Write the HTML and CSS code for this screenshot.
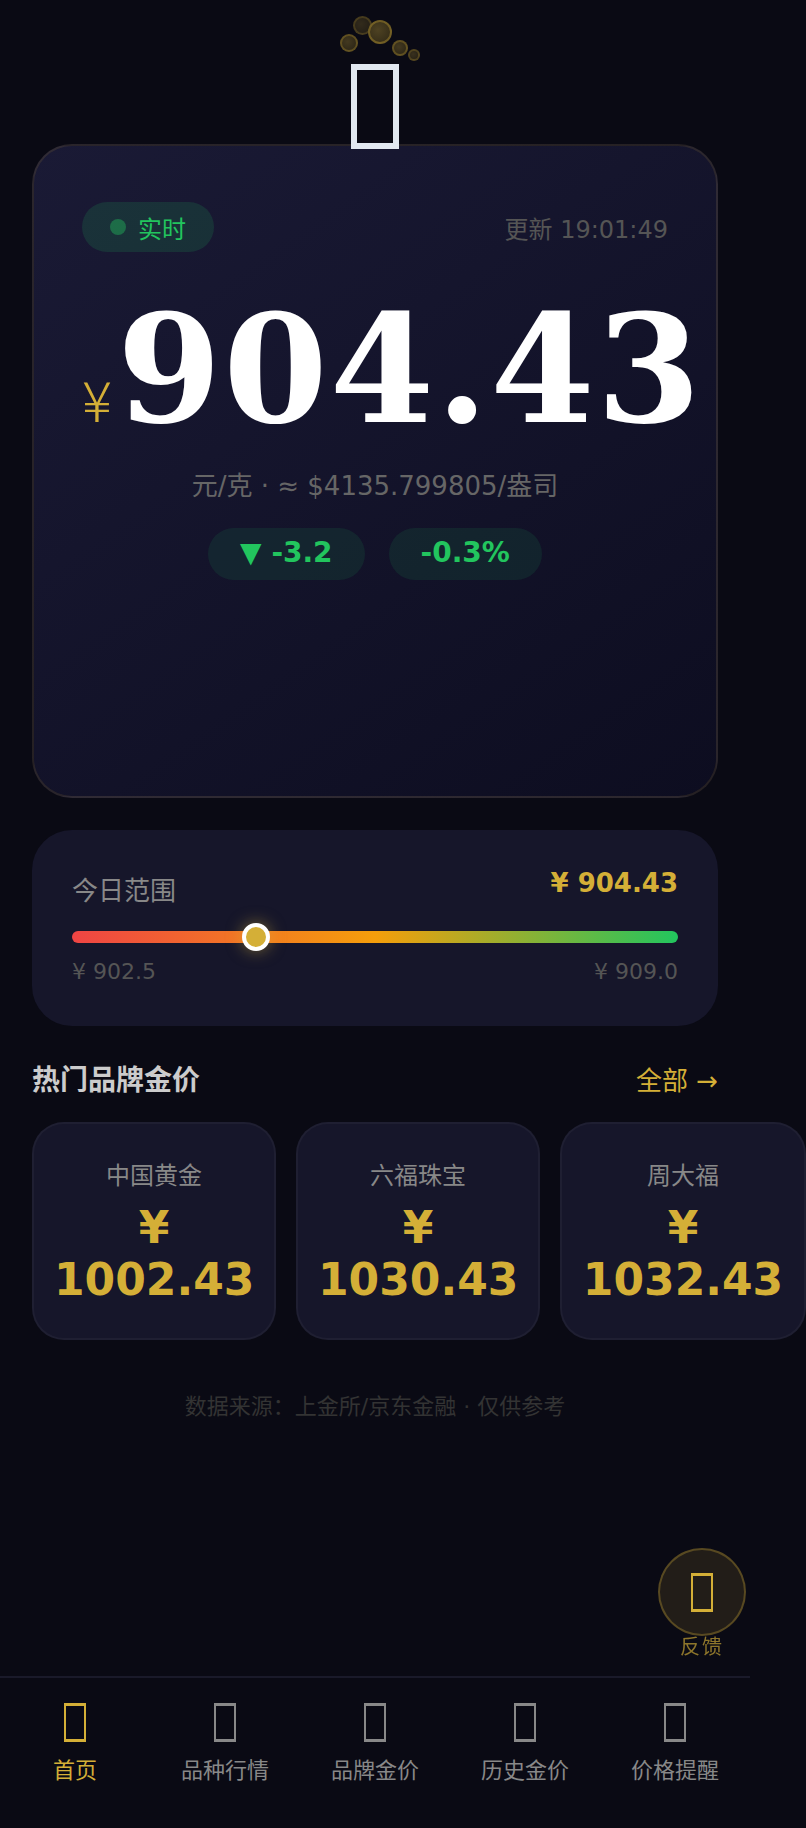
FILE: index.html
```html
<!DOCTYPE html>
<html lang="zh-CN">
<head>
  <meta charset="UTF-8">
  <meta name="viewport" content="width=device-width, initial-scale=1">
  <title>金价</title>
  <link rel="stylesheet" href="styles.css">
</head>
<body>
  <div class="page">
    <div class="logo">
      <span class="coin c1"></span>
      <span class="coin c2"></span>
      <span class="coin c3"></span>
      <span class="coin c4"></span>
      <span class="coin c5"></span>
      <span class="logo-icon"></span>
    </div>

    <div class="hero">
      <div class="hero-top">
        <div class="live"><span class="live-dot"></span>实时</div>
        <div class="update">更新 19:01:49</div>
      </div>
      <div class="price"><span class="price-cny">¥</span><span class="price-num">904.43</span></div>
      <div class="unit">元/克 · ≈ $4135.799805/盎司</div>
      <div class="changes">
        <span class="change">▼ -3.2</span>
        <span class="change">-0.3%</span>
      </div>
    </div>

    <div class="range">
      <div class="range-head">
        <span class="range-title">今日范围</span>
        <span class="range-now">¥ 904.43</span>
      </div>
      <div class="track"><span class="thumb" style="left:30.3%"></span></div>
      <div class="range-ends">
        <span>¥ 902.5</span>
        <span>¥ 909.0</span>
      </div>
    </div>

    <div class="sec-head">
      <h3>热门品牌金价</h3>
      <span class="sec-more">全部 →</span>
    </div>

    <div class="brands">
      <div class="brand">
        <div class="brand-name">中国黄金</div>
        <div class="brand-price">¥ 1002.43</div>
      </div>
      <div class="brand">
        <div class="brand-name">六福珠宝</div>
        <div class="brand-price">¥ 1030.43</div>
      </div>
      <div class="brand">
        <div class="brand-name">周大福</div>
        <div class="brand-price">¥ 1032.43</div>
      </div>
    </div>

    <div class="source">数据来源：上金所/京东金融 · 仅供参考</div>
  </div>

  <div class="fab">
    <div class="fab-btn"><span class="tofu"></span></div>
    <div class="fab-label">反馈</div>
  </div>

  <nav class="tabbar">
    <div class="tab active"><span class="tofu"></span><span>首页</span></div>
    <div class="tab"><span class="tofu"></span><span>品种行情</span></div>
    <div class="tab"><span class="tofu"></span><span>品牌金价</span></div>
    <div class="tab"><span class="tofu"></span><span>历史金价</span></div>
    <div class="tab"><span class="tofu"></span><span>价格提醒</span></div>
  </nav>
</body>
</html>
```

FILE: styles.css
```css
* { box-sizing: border-box; }
html, body { margin: 0; padding: 0; height: 100%; overflow: hidden; }
body { background: #0a0a14; color: #fff; font-family: "DejaVu Sans", "Noto Sans CJK SC", sans-serif; }
.page { width: 750px; padding: 0 32px; }

/* logo + coins */
.logo { position: relative; height: 144px; display: flex; justify-content: center; }
.logo-icon { position: relative; z-index: 2; width: 48px; height: 85px; margin-top: 64px; border: 6px solid #e2e8f0; }
.coin { position: absolute; border-radius: 50%; border: 2px solid #d4af3759; background: radial-gradient(circle at 40% 40%, #4e4222, #2f2816); }
.c1 { left: 321px; top: 16px; width: 19px; height: 19px; opacity: .6; }
.c2 { left: 336px; top: 20px; width: 24px; height: 24px; }
.c3 { left: 308px; top: 34px; width: 18px; height: 18px; opacity: .85; }
.c4 { left: 360px; top: 40px; width: 16px; height: 16px; opacity: .85; }
.c5 { left: 376px; top: 49px; width: 12px; height: 12px; opacity: .7; }

/* hero card */
.hero { height: 654px; padding: 56px 48px 0; border: 2px solid #d4af371f; border-radius: 40px; background: linear-gradient(145deg, #1a1a35, #0d0d20); }
.hero-top { display: flex; justify-content: space-between; align-items: center; }
.live { display: flex; align-items: center; gap: 12px; height: 50px; padding: 0 28px; border-radius: 25px; background: #22c55e26; color: #22c55e; font-size: 24px; }
.live-dot { width: 16px; height: 16px; border-radius: 50%; background: #22c55e; opacity: .4; }
.update { color: #555; font-size: 24px; }
.price { display: flex; align-items: baseline; justify-content: center; margin-top: 27px; margin-right: -35px; white-space: nowrap; }
.price-cny { width: 36px; color: #d4af37; font-family: "Noto Sans CJK SC", sans-serif; font-size: 56px; font-weight: 300; margin-right: 2px; }
.price-num { font-family: "DejaVu Serif", serif; font-size: 150px; font-weight: 700; line-height: 1.2; letter-spacing: 2px; }
.unit { margin-top: 6px; text-align: center; color: #666; font-size: 26px; }
.changes { display: flex; justify-content: center; gap: 24px; margin-top: 26px; }
.change { height: 52px; line-height: 50px; padding: 0 32px; border-radius: 26px; background: #22c55e1a; color: #22c55e; font-size: 28px; font-weight: 700; }

/* today range */
.range { margin-top: 32px; height: 196px; padding: 38px 40px 0; border-radius: 40px; background: #16162a; }
.range-head { display: flex; justify-content: space-between; align-items: flex-start; }
.range-title { color: #888; font-size: 26px; margin-top: 2px; }
.range-now { color: #d4af37; font-size: 26px; font-weight: 700; }
.track { position: relative; height: 12px; margin-top: 24px; border-radius: 6px; background: linear-gradient(90deg, #ef4444, #f59e0b 50%, #22c55e); }
.thumb { position: absolute; top: 50%; width: 28px; height: 28px; border-radius: 50%; border: 4px solid #fff; background: #d4af37; transform: translate(-50%, -50%); box-shadow: 0 0 16px #d4af3780; }
.range-ends { display: flex; justify-content: space-between; margin-top: 16px; color: #555; font-size: 22px; }

/* brands */
.sec-head { display: flex; justify-content: space-between; align-items: center; margin-top: 32px; }
.sec-head h3 { margin: 0; color: #ccc; font-size: 28px; font-weight: 700; }
.sec-more { color: #d4af37; font-size: 26px; }
.brands { display: flex; gap: 20px; margin-top: 24px; width: 774px; }
.brand { flex: 0 0 auto; width: 244px; height: 218px; padding: 32px 20px 0; border: 2px solid #ffffff0a; border-radius: 32px; background: #16162a; text-align: center; }
.brand:last-child { width: 246px; }
.brand-name { color: #888; font-size: 24px; }
.brand-price { margin-top: 11px; color: #d4af37; font-size: 44px; font-weight: 700; line-height: 52px; }
.source { margin-top: 48px; text-align: center; color: #333; font-size: 22px; }

/* floating feedback */
.fab { position: fixed; left: 658px; top: 1548px; width: 88px; text-align: center; }
.fab-btn { display: flex; align-items: center; justify-content: center; width: 88px; height: 88px; border-radius: 50%; border: 2px solid #d4af374d; background: #d4af371f; color: #d4af37; }
.fab-label { margin-top: -5px; color: #d4af37a6; font-size: 20px; letter-spacing: 2px; }

/* tab bar */
.tabbar { position: fixed; left: 0; bottom: 0; width: 750px; height: 152px; display: flex; border-top: 2px solid #1a1a2a; background: #0a0a14; padding-top: 25px; }
.tab { flex: 1; display: flex; flex-direction: column; align-items: center; gap: 10px; color: #888; font-size: 22px; }
.tab.active { color: #d4af37; }
/* box for a glyph with no font */
.tofu { display: block; width: 22px; height: 39px; border: 3px solid currentColor; border-left-width: 2px; border-right-width: 2px; }
```
